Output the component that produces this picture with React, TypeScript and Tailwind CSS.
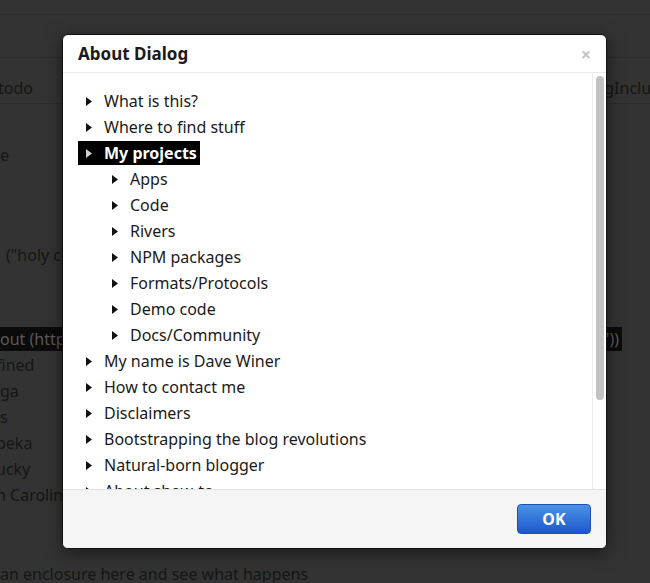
import React from 'react';

type Item = { label: string; level: number; selected?: boolean };

const ITEMS: Item[] = [
  { label: 'What is this?', level: 0 },
  { label: 'Where to find stuff', level: 0 },
  { label: 'My projects', level: 0, selected: true },
  { label: 'Apps', level: 1 },
  { label: 'Code', level: 1 },
  { label: 'Rivers', level: 1 },
  { label: 'NPM packages', level: 1 },
  { label: 'Formats/Protocols', level: 1 },
  { label: 'Demo code', level: 1 },
  { label: 'Docs/Community', level: 1 },
  { label: 'My name is Dave Winer', level: 0 },
  { label: 'How to contact me', level: 0 },
  { label: 'Disclaimers', level: 0 },
  { label: 'Bootstrapping the blog revolutions', level: 0 },
  { label: 'Natural-born blogger', level: 0 },
  { label: 'About show-to', level: 0 },
];

const Triangle: React.FC<{ color?: string }> = ({ color = '#111' }) => (
  <svg width="6" height="9" viewBox="0 0 6 9" className="shrink-0">
    <polygon points="0,0 6,4.5 0,9" fill={color} />
  </svg>
);

const TreeRow: React.FC<{ item: Item }> = ({ item }) => (
  <div className={`h-[26px] flex items-center ${item.level === 1 ? 'pl-[26px]' : ''}`}>
    <span
      className={`inline-flex items-center h-[24px] pl-[8px] pr-[3px] ${
        item.selected ? 'bg-black text-white font-bold' : 'text-[#1a1a1a]'
      }`}
    >
      <Triangle color={item.selected ? '#cfcfcf' : '#111'} />
      <span className="ml-[12px] whitespace-nowrap">{item.label}</span>
    </span>
  </div>
);

const BgLine: React.FC<{ children: React.ReactNode; className?: string }> = ({ children, className = '' }) => (
  <div className={`h-[26px] flex items-center whitespace-nowrap ${className}`}>{children}</div>
);

export default function App() {
  return (
    <div className="relative w-[650px] h-[583px] overflow-hidden bg-[#333333] text-[16px] text-[#161616] font-['Noto_Sans','Open_Sans',sans-serif]">
      {/* dimmed page behind the dialog */}
      <div className="h-[15px] border-b border-[#2c2c2c]" />
      <div className="h-[43px] border-b border-[#2c2c2c]" />
      <div className="h-[46px] pt-[15px] border-b border-[#2c2c2c] flex items-center justify-between">
        <span className="-ml-[2px]">todo</span>
        <span className="-mr-[20px]">gInclude</span>
      </div>
      <BgLine className="mt-[38px]">e</BgLine>
      <BgLine className="mt-[74px] pl-[6px]">("holy cow")</BgLine>
      <BgLine className="mt-[58px] justify-between">
        <span className="bg-[#0b0b0b] text-[#5a5a5a] pr-[40px]">out (http://</span>
        <span className="bg-[#0b0b0b] text-[#5a5a5a] pl-[60px] pr-[3px] mr-[28px]">'))</span>
      </BgLine>
      <BgLine className="-ml-[4px]">fined</BgLine>
      <BgLine>ga</BgLine>
      <BgLine>s</BgLine>
      <BgLine className="-ml-[4px]">peka</BgLine>
      <BgLine className="-ml-[4px]">ucky</BgLine>
      <BgLine className="-ml-[4px]">h Carolina</BgLine>
      <BgLine className="mt-[53px]">an enclosure here and see what happens</BgLine>

      {/* dialog */}
      <div className="absolute left-[62px] top-[34px] w-[545px] h-[515px] flex flex-col bg-white border border-[#111] rounded-[6px] overflow-hidden shadow-[0_4px_18px_rgba(0,0,0,0.5)]">
        <div className="h-[38px] shrink-0 flex items-center justify-between pl-[15px] pr-[15px] border-b border-[#ececec]">
          <span className="text-[17px] font-bold text-[#1a1a1a]">About Dialog</span>
          <span className="text-[18px] font-bold text-[#c4c4c4] leading-none">×</span>
        </div>
        <div className="flex-1 min-h-0 flex">
          <div className="flex-1 overflow-hidden pt-[15px] pl-[15px]">
            {ITEMS.map((item) => (
              <TreeRow key={item.label} item={item} />
            ))}
          </div>
          <div className="w-[14px] shrink-0 border-l border-[#ececec] pt-[3px] flex justify-center">
            <div className="w-[8px] h-[324px] rounded-full bg-[#c2c2c2]" />
          </div>
        </div>
        <div className="h-[59px] shrink-0 bg-[#f5f5f5] border-t border-[#e2e2e2] flex items-center justify-end pr-[15px]">
          <button className="w-[74px] h-[30px] rounded-[4px] border border-[#1c4fb8] bg-gradient-to-b from-[#4b93e6] to-[#1f56cc] text-white font-bold text-[16px]">
            OK
          </button>
        </div>
      </div>
    </div>
  );
}
